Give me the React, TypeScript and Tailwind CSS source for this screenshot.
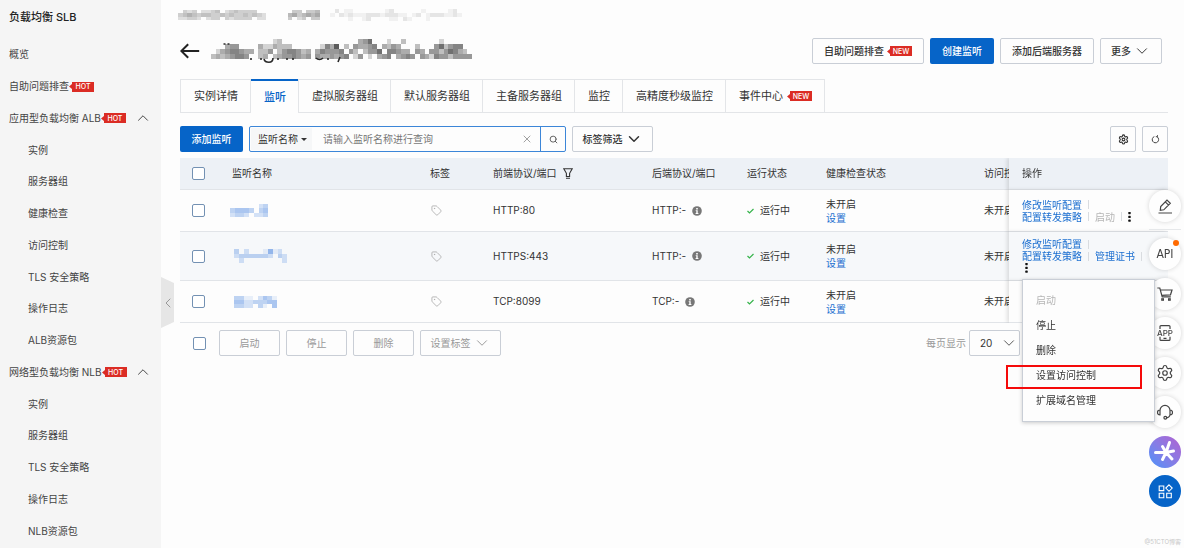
import React from 'react';
import { ChevronDown, ChevronLeft, ChevronUp, Search, Settings, Tag, X } from 'lucide-react';

type NavItem = { label: string; sub?: boolean; hot?: boolean; open?: boolean };

const navItems: NavItem[] = [
  { label: '概览' },
  { label: '自助问题排查', hot: true },
  { label: '应用型负载均衡 ALB', hot: true, open: true },
  { label: '实例', sub: true },
  { label: '服务器组', sub: true },
  { label: '健康检查', sub: true },
  { label: '访问控制', sub: true },
  { label: 'TLS 安全策略', sub: true },
  { label: '操作日志', sub: true },
  { label: 'ALB资源包', sub: true },
  { label: '网络型负载均衡 NLB', hot: true, open: true },
  { label: '实例', sub: true },
  { label: '服务器组', sub: true },
  { label: 'TLS 安全策略', sub: true },
  { label: '操作日志', sub: true },
  { label: 'NLB资源包', sub: true },
];

const tabs = [
  { label: '实例详情' },
  { label: '监听', active: true },
  { label: '虚拟服务器组' },
  { label: '默认服务器组' },
  { label: '主备服务器组' },
  { label: '监控' },
  { label: '高精度秒级监控' },
  { label: '事件中心', isNew: true },
];

// every digit is the opacity of one cell, in tenths
const titleCells = [
  '             23                457   2  3       2      ',
  '   455    4224333      2648 3 54456 4354   3   573566  ',
  ' 24566544 335 3566534 465556 53 3557 66544 54 55357643 ',
  '34345665  34 34556545 5445456 25 2 456 4565 542655355557',
];
const crumbCells = [
  ' 323 2234 2343333   ',
  '3454344334343343432 ',
  '22332 233 323333 22 ',
];
const crumbCells2 = ['  33 334', ' 4534545', ' 3 23 33'];
const crumbCells3 = [
  ' 2 11       12      1     12 ',
  '1 212111222122211 12 12221121',
  '    1  12    11 21   1       ',
];

const rows = [
  {
    front: 'HTTP:80',
    back: 'HTTP:-',
    cells: ['      23', '34443 34', '2332 223'],
    mosaic: '-ml-[2px] h-[13px] w-[38px]',
    height: 'h-[42px]',
    actions: ['配置转发策略', '启动'],
  },
  {
    front: 'HTTPS:443',
    back: 'HTTP:-',
    cells: ['3 2   1512  ', '23333332 32 ', ' 2        2 '],
    mosaic: 'ml-[2px] h-[14px] w-[58px]',
    height: 'h-[49px] bg-[#f6f8fa]',
    actions: ['配置转发策略', '管理证书'],
  },
  {
    front: 'TCP:8099',
    back: 'TCP:-',
    cells: ['3311 2431', '442233344', '3322 31 4'],
    mosaic: 'ml-[2px] h-[12px] w-[43px]',
    height: 'h-[42px]',
    actions: [],
  },
];

const outline =
  'flex h-[26px] items-center justify-center rounded-[2px] border border-[#c9ced6] bg-[#fdfdfd] text-[10px] font-medium text-[#333]';
const primary =
  'flex h-[26px] items-center justify-center rounded-[2px] bg-[#0664c8] text-[10px] font-medium text-white';
const link = 'whitespace-nowrap text-[#1c6fd0]';

const Mosaic = ({ cells, fill, className }: { cells: string[]; fill: string; className: string }) => (
  <svg
    className={className}
    viewBox={`0 0 ${cells[0].length} ${cells.length}`}
    preserveAspectRatio="none"
    shapeRendering="crispEdges"
    aria-hidden="true"
  >
    {cells.map((line, y) =>
      line.split('').map((c, x) =>
        c === ' ' ? null : (
          <rect key={`${x}-${y}`} x={x} y={y} width="1" height="1" fill={fill} opacity={Number(c) / 10} />
        ),
      ),
    )}
  </svg>
);

const Badge = ({ text }: { text: string }) => (
  <span className="flex items-center">
    <svg className="h-[5px] w-[3px]" viewBox="0 0 3 5">
      <path d="M0 2.5L3 0v5z" fill="#db2c24" />
    </svg>
    <span className="flex h-[10px] w-[22px] items-center justify-center bg-[#db2c24] text-[7px] font-medium leading-none text-white">
      {text}
    </span>
  </span>
);

const Check = ({ label }: { label: string }) => (
  <input
    type="checkbox"
    aria-label={label}
    className="block size-[13px] appearance-none rounded-[2px] border border-[#7391b3] bg-white checked:bg-[#0664c8]"
  />
);

const Dots = () => (
  <svg className="h-[10px] w-[3px]" viewBox="0 0 3 10" fill="#111">
    <rect x="0.3" y="0" width="2.4" height="2.2" rx="0.6" />
    <rect x="0.3" y="3.8" width="2.4" height="2.2" rx="0.6" />
    <rect x="0.3" y="7.6" width="2.4" height="2.2" rx="0.6" />
  </svg>
);

const Info = () => (
  <svg className="size-[10px]" viewBox="0 0 10 10">
    <circle cx="5" cy="5" r="4.8" fill="#777" />
    <path d="M4.2 2.1h1.6v1.3H4.2zM3.7 4.2h2v2.9h.7v.9H3.6v-.9h.7V5.1h-.6z" fill="#fff" />
  </svg>
);

const Sep = () => <span className="mx-[6px] h-[9px] w-px bg-[#d9dce0]" />;

const Sidebar = () => (
  <aside className="flex min-h-screen w-[161px] shrink-0 flex-col bg-[#f5f5f5] pb-px">
    <h1 className="flex h-[39px] items-center pb-1 pl-[9px] text-[11px] font-medium text-[#222]">负载均衡 SLB</h1>
    <nav className="flex flex-1 flex-col">
      {navItems.map((item, idx) => (
        <a
          key={idx}
          href="#"
          className={`flex flex-1 items-center pr-[9px] text-[#444] ${item.sub ? 'pl-7' : 'pl-[9px]'}`}
        >
          <span className="whitespace-nowrap">{item.label}</span>
          {item.hot && <Badge text="HOT" />}
          {item.open && <ChevronUp className="ml-auto size-[18px]" strokeWidth={1.3} />}
        </a>
      ))}
    </nav>
  </aside>
);

const Header = () => (
  <header>
    <div className="-ml-[2px] flex h-[24px] items-center pt-[6px]">
      <Mosaic cells={crumbCells} fill="#666" className="h-[10px] w-[93px]" />
      <Mosaic cells={crumbCells2} fill="#555" className="ml-[12px] h-[10px] w-[37px]" />
      <Mosaic cells={crumbCells3} fill="#888" className="ml-[10px] h-[12px] w-[132px]" />
    </div>
    <div className="flex h-[55px] items-center pb-px pr-[6px]">
      <button aria-label="返回">
        <svg className="h-4 w-5" viewBox="0 0 20 16" fill="none" stroke="#222" strokeWidth="2">
          <path d="M1 8h18.200M8.200 1.200L1.300 8l6.900 6.800" />
        </svg>
      </button>
      <div className="relative ml-[11px] pb-[5px]">
        <Mosaic cells={titleCells} fill="#333" className="h-[20px] w-[261px]" />
        <svg className="absolute left-0 top-0 h-[26px] w-[261px]" viewBox="0 0 261 26" fill="none" stroke="#2a2a2a" strokeWidth="1.6">
          <path d="M12.5 5h2M16.500 5h2M40 19v2M50 19v2M53 20c1 4 9 5 9-1M67 19v2M76 19v2M82 19v2M105 19c2 2 5 2 7 0M117 19v2M127 23l2-5" />
        </svg>
      </div>
      <div className="ml-auto flex gap-[6px]">
        <button className={`${outline} w-[112px] gap-[3px]`}>
          自助问题排查
          <Badge text="NEW" />
        </button>
        <button className={`${primary} w-[64px]`}>创建监听</button>
        <button className={`${outline} w-[94px]`}>添加后端服务器</button>
        <button className={`${outline} w-[62px] gap-[2px]`}>
          更多
          <ChevronDown className="size-[18px]" strokeWidth={1.3} />
        </button>
      </div>
    </div>
  </header>
);

const Tabs = () => (
  <div role="tablist" className="flex h-[34px] text-[11px] text-[#333]">
    {tabs.map((tab, idx) => (
      <button
        key={tab.label}
        role="tab"
        aria-selected={!!tab.active}
        className={`flex items-center whitespace-nowrap pl-[13px] pr-3 ${
          tab.active
            ? 'border-t-2 border-[#0664c8] font-medium text-[#0664c8]'
            : `border-y border-r border-[#e3e5e8] ${idx === 0 || idx === 2 ? 'border-l' : ''}`
        }`}
      >
        {tab.label}
        {tab.isNew && (
          <span className="ml-1">
            <Badge text="NEW" />
          </span>
        )}
      </button>
    ))}
    <div className="flex-1 border-b border-[#e3e5e8]" />
  </div>
);

const Toolbar = () => (
  <div className="flex items-center pb-[6px] pt-[13px]">
    <button className={`${primary} w-[63px]`}>添加监听</button>
    <div className="ml-[6px] flex h-[26px] w-[317px] items-center rounded-[2px] border border-[#3c86d8] bg-[#fdfdfd]">
      <label className="relative ml-px flex h-[22px] items-center bg-[#f6f7f8]">
        <select aria-label="搜索字段" className="w-[61px] appearance-none pl-[7px] text-[10px] text-[#333] outline-none">
          <option>监听名称</option>
        </select>
        <svg className="pointer-events-none absolute right-[5px] h-[3px] w-[6px]" viewBox="0 0 6 3">
          <path d="M0 0h6L3 3z" fill="#333" />
        </svg>
      </label>
      <input
        aria-label="监听名称"
        placeholder="请输入监听名称进行查询"
        className="min-w-0 flex-1 pl-[11px] text-[10px] outline-none placeholder:text-[#777]"
      />
      <button aria-label="清除" className="mr-[7px]">
        <X className="size-3 text-[#888]" strokeWidth={1.6} />
      </button>
      <button aria-label="搜索" className="flex h-full w-[25px] items-center justify-center border-l border-[#3c86d8]">
        <Search className="size-[9px] text-[#555]" strokeWidth={2.4} />
      </button>
    </div>
    <button className={`${outline} ml-[6px] w-[81px] gap-[2px]`}>
      标签筛选
      <ChevronDown className="size-[18px]" strokeWidth={2} />
    </button>
    <div className="ml-auto flex gap-[6px]">
      <button aria-label="列设置" className={`${outline} w-[26px]`}>
        <Settings className="size-[11px]" strokeWidth={2.4} />
      </button>
      <button aria-label="刷新" className={`${outline} w-[26px]`}>
        <svg className="size-[9px]" viewBox="0 0 9 9" fill="none" stroke="#444" strokeWidth="1">
          <path d="M3.300 1.600A3.200 3.200 0 1 0 6.300 2M4.800 1.700h1.700v-1.500" />
        </svg>
      </button>
    </div>
  </div>
);

const ActionMenu = () => (
  <div
    role="menu"
    className="absolute right-[13px] top-[121px] z-20 flex w-[133px] flex-col border border-[#c9ced6] bg-[#fdfdfd] py-2 shadow-[0_1px_4px_rgba(0,0,0,0.2)]"
  >
    {['启动', '停止', '删除', '设置访问控制', '扩展域名管理'].map((label) => (
      <button
        key={label}
        role="menuitem"
        disabled={label === '启动'}
        className="relative h-[25px] pl-[13px] text-left text-[#333] disabled:text-[#b5b5b5]"
      >
        {label}
        {label === '设置访问控制' && (
          <span className="absolute -left-[17px] right-[12px] top-[2px] h-6 border-2 border-[#f50a0a]" />
        )}
      </button>
    ))}
  </div>
);

const RowActions = ({ actions }: { actions: string[] }) => {
  if (!actions.length) return null;
  const [first, second] = actions;
  const disabled = second === '启动';

  return (
    <div className="flex flex-col leading-3">
      <div className="flex items-center">
        <a href="#" className={link}>
          修改监听配置
        </a>
        <Sep />
      </div>
      <div className="flex items-center">
        <a href="#" className={link}>
          {first}
        </a>
        <Sep />
        {disabled ? (
          <button disabled className="text-[#b5b5b5]">
            {second}
          </button>
        ) : (
          <a href="#" className={link}>
            {second}
          </a>
        )}
        <Sep />
        {disabled && (
          <button aria-label="更多操作">
            <Dots />
          </button>
        )}
      </div>
      {!disabled && (
        <button aria-label="更多操作" className="flex h-3 items-center pl-[3px]">
          <Dots />
        </button>
      )}
    </div>
  );
};

const ListenerTable = () => (
  <div className="relative">
    <div className="overflow-hidden">
      <table className="w-full min-w-[1051px] table-fixed border-separate border-spacing-0 text-left text-[#333]">
        <colgroup>
          <col className="w-[40px]" />
          <col className="w-[198px]" />
          <col className="w-[63px]" />
          <col className="w-[159px]" />
          <col className="w-[95px]" />
          <col className="w-[79px]" />
          <col className="w-[158px]" />
          <col className="w-[100px]" />
          <col className="w-[159px]" />
        </colgroup>
        <thead>
          <tr className="h-8 bg-[#edf1f6] [&>th]:border-b [&>th]:border-[#e1e4e8] [&>th]:pl-3 [&>th]:font-normal">
            <th>
              <Check label="全选" />
            </th>
            <th>监听名称</th>
            <th>标签</th>
            <th>
              <span className="flex items-center gap-[6px]">
                前端协议/端口
                <svg className="h-[11px] w-[10px]" viewBox="0 0 10 11" fill="none" stroke="#333" strokeWidth="1.1">
                  <path d="M.8.7h8.400L6.600 5.300v3.200H3.400V5.300zM3 10.300h4" />
                </svg>
              </span>
            </th>
            <th>后端协议/端口</th>
            <th>运行状态</th>
            <th>健康检查状态</th>
            <th>
              <span className="block w-[26px] overflow-hidden whitespace-nowrap">访问控</span>
            </th>
            <th className="sticky right-0 bg-[#edf1f6] shadow-[-2px_0_4px_rgba(0,0,0,0.12)]">
              <span className="ml-px">操作</span>
            </th>
          </tr>
        </thead>
        <tbody>
          {rows.map((row) => (
            <tr
              key={row.front}
              className={`${row.height} [&>td]:border-b [&>td]:border-[#e1e4e8] [&>td]:py-0 [&>td]:pl-3 [&>td]:pr-0`}
            >
              <td>
                <Check label={row.front} />
              </td>
              <td>
                <a href="#" aria-label={row.front} className="block">
                  <Mosaic cells={row.cells} fill="#2f74dc" className={row.mosaic} />
                </a>
              </td>
              <td>
                <Tag className="ml-px size-[11px] text-[#aaa]" strokeWidth={1.8} />
              </td>
              <td>{row.front}</td>
              <td>
                <span className="flex items-center gap-[6px]">
                  {row.back}
                  <Info />
                </span>
              </td>
              <td>
                <span className="flex items-center gap-[6px]">
                  <svg className="h-[6px] w-[7px]" viewBox="0 0 7 6" fill="none" stroke="#35b34a" strokeWidth="1.2">
                    <path d="M.5 3l2 2L6.500 1" />
                  </svg>
                  运行中
                </span>
              </td>
              <td>
                <div className="leading-[14px]">未开启</div>
                <a href="#" className={`block leading-[14px] ${link}`}>
                  设置
                </a>
              </td>
              <td>
                <span className="block w-[26px] overflow-hidden whitespace-nowrap">未开启</span>
              </td>
              <td
                className={`sticky right-0 shadow-[-2px_0_4px_rgba(0,0,0,0.12)] ${
                  row.front === 'HTTPS:443' ? 'bg-[#f6f8fa]' : 'bg-[#fdfdfd]'
                }`}
              >
                <div className="ml-px">
                  <RowActions actions={row.actions} />
                </div>
              </td>
            </tr>
          ))}
        </tbody>
      </table>
    </div>
    <ActionMenu />
  </div>
);

const FooterBar = () => (
  <div className="flex items-center pl-[13px] pr-[148px] pt-[7px]">
    <Check label="全选本页" />
    <div className="ml-[13px] flex gap-[6px] [&>button]:font-normal [&>button]:text-[#999]">
      <button className={`${outline} w-[61px]`}>启动</button>
      <button className={`${outline} w-[61px]`}>停止</button>
      <button className={`${outline} w-[61px]`}>删除</button>
      <button className={`${outline} w-[81px] gap-[2px]`}>
        设置标签
        <ChevronDown className="size-[18px]" strokeWidth={1.3} />
      </button>
    </div>
    <label className="ml-auto flex items-center gap-[3px] whitespace-nowrap text-[#999]">
      每页显示
      <span className="relative flex items-center">
        <select className="h-[26px] w-[51px] appearance-none rounded-[2px] border border-[#c9ced6] bg-[#fdfdfd] pl-[10px] text-[10px] text-[#333]">
          <option>20</option>
        </select>
        <ChevronDown className="pointer-events-none absolute right-[2px] size-[18px] text-[#555]" strokeWidth={1.3} />
      </span>
    </label>
  </div>
);

const round = 'flex size-8 items-center justify-center rounded-full bg-[#fefefe] shadow-[0_0_5px_rgba(0,0,0,0.16)]';

const FloatingTools = () => (
  <div className="fixed right-[3px] top-[190px] z-10 flex w-8 flex-col">
    <button aria-label="反馈" className={round}>
      <svg className="size-4" viewBox="0 0 16 16" fill="none" stroke="#444" strokeWidth="1.2">
        <path d="M1.500 15h13.500M3.300 12.300l.4-3.700L10 2l3.300 3.200-6.500 6.600zM8.300 3.800l3.300 3.300" />
      </svg>
    </button>
    <div className="mt-[7px] h-px bg-[#e6e8ea]" />
    <div className="mt-2 flex h-[269px] flex-col justify-between">
      <button
        className={`${round} relative font-['Liberation_Sans_Narrow','DejaVu_Sans_Condensed','Roboto',sans-serif] text-[12px] text-[#444]`}
      >
        API
        <span className="absolute right-[2px] top-[2px] size-[6px] rounded-full bg-[#ff6a00]" />
      </button>
      <button aria-label="购物车" className={round}>
        <svg className="size-4" viewBox="0 0 16 16" fill="none" stroke="#444" strokeWidth="1.2">
          <path d="M.3 2h2.500l2.400 8.800h8.600M3.300 4h11.700l-1.500 4.800-8.800.5" />
          <rect x="4.800" y="12.800" width="1.600" height="1.400" />
          <rect x="11.600" y="12.800" width="1.600" height="1.400" />
        </svg>
      </button>
      <button aria-label="应用" className={`${round} relative`}>
        <svg className="size-4" viewBox="0 0 16 16" fill="none" stroke="#444" strokeWidth="1.2">
          <path d="M3 4V1.600q0-1 1-1h8q1 0 1 1V4M3 11.800v2.600q0 1 1 1h8q1 0 1-1v-2.600M6.500 13.300h3" />
        </svg>
        <span className="absolute inset-0 flex items-center justify-center text-[8px] font-medium text-[#444]">APP</span>
      </button>
      <button aria-label="设置" className={round}>
        <Settings className="size-[18px] text-[#444]" strokeWidth={1.6} />
      </button>
      <button aria-label="客服" className={round}>
        <svg className="size-4" viewBox="0 0 16 16" fill="none" stroke="#444" strokeWidth="1.2">
          <path d="M3 6.500a5 5.200 0 0 1 10 0M3 6q-2.500 0-2.500 2.500T3 11zM13 6q2.500 0 2.500 2.500T13 11zM13 11q-.5 2.400-3.400 2.800" />
          <circle cx="8.300" cy="13.800" r="1.400" />
        </svg>
      </button>
      <button
        aria-label="智能助手"
        className="flex size-8 items-center justify-center rounded-full bg-linear-to-bl from-[#b05fd0] to-[#3f92fa]"
      >
        <svg className="size-6" viewBox="0 0 24 24" fill="none" stroke="#fff" strokeWidth="3" strokeLinecap="round">
          <path d="M2.500 12.500H13M13 12.500L16.500 2.500M13 12.500l7.500-1.500M13 12.500l6 6.500M13 12.500L9.500 19.500M13 12.500L9.500 6.500" />
        </svg>
      </button>
      <button aria-label="全部工具" className="flex size-8 items-center justify-center rounded-full bg-[#0664c8]">
        <svg className="size-[15px]" viewBox="0 0 15 15" fill="none" stroke="#fff" strokeWidth="1.100">
          <path d="M1.200 2h4.600v4.600H1.200zM1.200 9.200h4.600v4.600H1.200zM8.700 9.200h4.600v4.600H8.700zM11 .9l3.200 3.200L11 7.300 7.800 4.100z" />
        </svg>
      </button>
    </div>
  </div>
);

export default function App() {
  return (
    <div
      lang="zh-CN"
      className="relative flex min-h-screen bg-[#fdfdfd] font-['Inter','Noto_Sans_CJK_SC',sans-serif] text-[10px] text-[#333]"
    >
      <Sidebar />
      <button
        aria-label="收起菜单"
        className="absolute left-[161px] top-[277px] flex h-[51px] w-[13px] items-center justify-center bg-[#e6e6e6] [clip-path:polygon(0_0,100%_12%,100%_88%,0_100%)]"
      >
        <ChevronLeft className="size-4 shrink-0 text-[#999]" strokeWidth={1.5} />
      </button>
      <main className="min-w-0 flex-1 pl-[19px] pr-4">
        <Header />
        <Tabs />
        <Toolbar />
        <ListenerTable />
        <FooterBar />
      </main>
      <FloatingTools />
      <span className="absolute bottom-[2px] right-[3px] text-[6px] text-[#c8c8c8]">@51CTO博客</span>
    </div>
  );
}
